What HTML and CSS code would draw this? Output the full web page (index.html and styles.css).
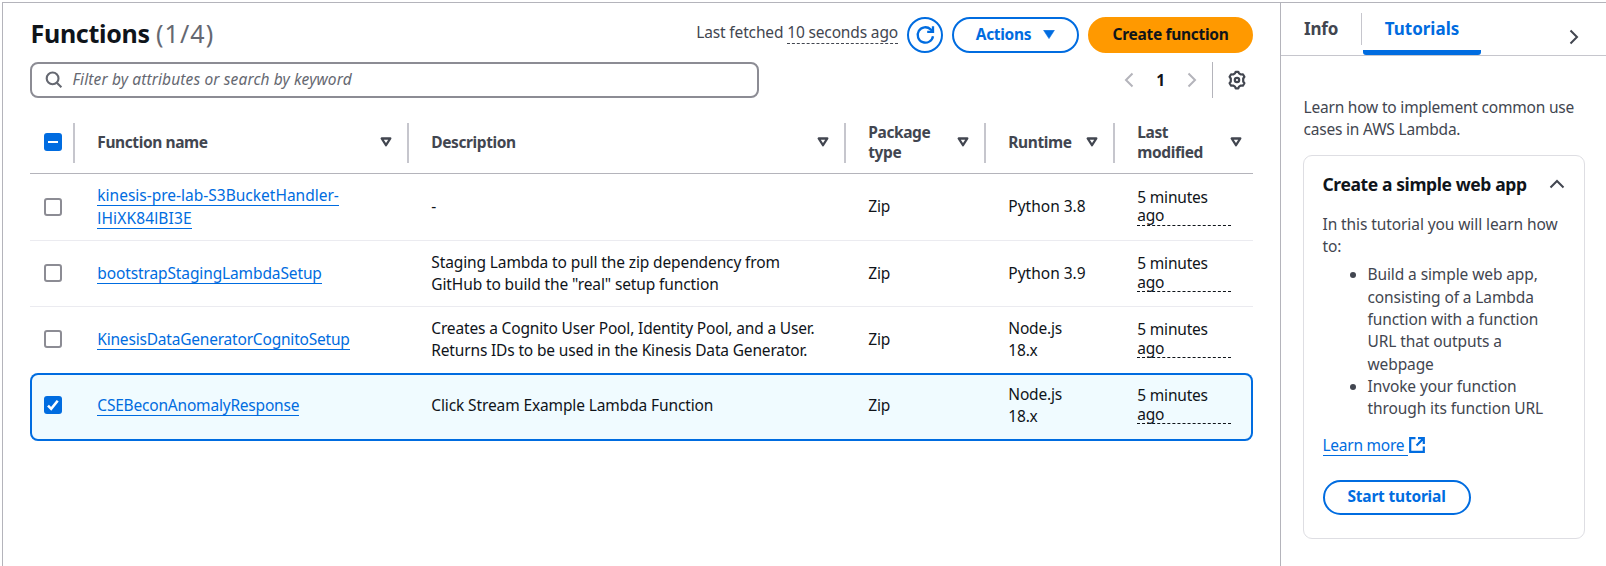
FILE: index.html
```html
<!DOCTYPE html>
<html lang="en">
<head>
<meta charset="utf-8">
<title>Functions</title>
<link rel="stylesheet" href="styles.css">
</head>
<body>
<div class="app">
  <main class="main">
    <header class="header">
      <h1 class="title">Functions <span class="count">(1/4)</span></h1>
      <div class="actions">
        <span class="fetched">Last fetched <span class="dashed">10 seconds ago</span></span>
        <button class="btn round" aria-label="Refresh"><svg width="20" height="20" viewBox="0 0 20 20" fill="none" stroke="currentColor" stroke-width="2.3"><path d="M18 11.2A7.7 7.7 0 1 1 15.600 4.300L17.600 6.200"/><path d="M18 1.200v5.600h-5.800"/></svg></button>
        <button class="btn menu">Actions<svg width="12" height="9" viewBox="0 0 12 9"><path d="M.6.3h10.8L6 8.6z" fill="currentColor" stroke="currentColor" stroke-width=".6" stroke-linejoin="round"/></svg></button>
        <button class="btn primary">Create function</button>
      </div>
    </header>
    <div class="toolbar">
      <div class="search"><svg width="18" height="18" viewBox="0 0 18 18" fill="none" stroke="currentColor" stroke-width="2.1"><circle cx="7.6" cy="7.4" r="5.9"/><path d="M11.8 11.7l4.6 4.5"/></svg><span class="placeholder">Filter by attributes or search by keyword</span></div>
      <div class="pager">
        <svg class="arrow" width="10" height="16" viewBox="0 0 10 16"><path d="M8.5 1.5L2 8l6.500 6.500"/></svg>
        <span class="page">1</span>
        <svg class="arrow" width="10" height="16" viewBox="0 0 10 16"><path d="M1.500 1.500L8 8l-6.500 6.500"/></svg>
        <span class="rule"></span>
        <svg class="gear" width="20" height="20" viewBox="0 0 20 20"><path d="M8 3.400L8.700 1.800h2.600l.7 1.600 1.900 1.100 2-.2 1.500 2.500-1.200 1.700v3l1.200 1.700-1.500 2.500-2-.2-1.900 1.100-.7 1.700H8.700L8 16.600l-1.900-1.100-2 .2-1.500-2.500 1.200-1.700v-3L2.600 6.800l1.500-2.500 2 .2z"/><circle cx="10" cy="10" r="2.200"/></svg>
      </div>
    </div>
    <div class="table">
      <div class="row head">
        <div class="cell check"><span class="box on"><svg width="18" height="18" viewBox="0 0 18 18"><path d="M4 9h10"/></svg></span></div>
        <div class="cell">Function name<svg class="sort" viewBox="0 0 12 10"><path d="M1.700 1.500h8.600L6 8.200z"/></svg></div>
        <div class="cell">Description<svg class="sort" viewBox="0 0 12 10"><path d="M1.700 1.500h8.600L6 8.200z"/></svg></div>
        <div class="cell"><span>Package<br>type</span><svg class="sort" viewBox="0 0 12 10"><path d="M1.700 1.500h8.600L6 8.200z"/></svg></div>
        <div class="cell">Runtime<svg class="sort" viewBox="0 0 12 10"><path d="M1.700 1.500h8.600L6 8.200z"/></svg></div>
        <div class="cell"><span>Last<br>modified</span><svg class="sort" viewBox="0 0 12 10"><path d="M1.700 1.500h8.600L6 8.200z"/></svg></div>
      </div>
      <div class="row first">
        <div class="cell check"><span class="box"></span></div>
        <div class="cell"><span><a class="link wide">kinesis-pre-lab-S3BucketHandler-</a><br><a class="link wider">lHiXK84lBI3E</a></span></div>
        <div class="cell">-</div><div class="cell">Zip</div><div class="cell wide">Python 3.8</div>
        <div class="cell"><span class="time">5 minutes<br>ago</span></div>
      </div>
      <div class="row">
        <div class="cell check"><span class="box"></span></div>
        <div class="cell"><a class="link desc">bootstrapStagingLambdaSetup</a></div>
        <div class="cell desc">Staging Lambda to pull the zip dependency from<br>GitHub to build the "real" setup function</div>
        <div class="cell">Zip</div><div class="cell wide">Python 3.9</div>
        <div class="cell"><span class="time">5 minutes<br>ago</span></div>
      </div>
      <div class="row last">
        <div class="cell check"><span class="box"></span></div>
        <div class="cell"><a class="link">KinesisDataGeneratorCognitoSetup</a></div>
        <div class="cell desc tight">Creates a Cognito User Pool, Identity Pool, and a User.<br>Returns IDs to be used in the Kinesis Data Generator.</div>
        <div class="cell">Zip</div><div class="cell">Node.js<br>18.x</div>
        <div class="cell"><span class="time">5 minutes<br>ago</span></div>
      </div>
      <div class="row selected">
        <div class="cell check"><span class="box on"><svg width="18" height="18" viewBox="0 0 18 18"><path class="tick" d="M4 9.600l3.200 3.200 6.500-8"/></svg></span></div>
        <div class="cell"><a class="link">CSEBeconAnomalyResponse</a></div>
        <div class="cell desc">Click Stream Example Lambda Function</div>
        <div class="cell">Zip</div><div class="cell">Node.js<br>18.x</div>
        <div class="cell"><span class="time">5 minutes<br>ago</span></div>
      </div>
    </div>
  </main>
  <aside class="panel">
    <nav class="tabs">
      <span class="tab info">Info</span>
      <span class="tab active">Tutorials</span>
      <svg class="collapse" width="10" height="16" viewBox="0 0 10 16"><path d="M1.500 1.500L8 8l-6.500 6.500"/></svg>
    </nav>
    <p class="intro">Learn how to implement common use<br>cases in AWS Lambda.</p>
    <section class="card">
      <h2 class="card-title">Create a simple web app<svg width="16" height="10" viewBox="0 0 16 10"><path d="M1.500 8.500L8 2l6.500 6.500"/></svg></h2>
      <p class="text">In this tutorial you will learn how<br>to:</p>
      <ul class="list">
        <li>Build a simple web app,<br>consisting of a Lambda<br>function with a function<br>URL that outputs a<br>webpage</li>
        <li>Invoke your function<br>through its function URL</li>
      </ul>
      <a class="learn"><span class="learn-text">Learn more</span><svg width="16" height="16" viewBox="0 0 16 16"><path d="M6.500 1.200H1.200v13.600h13.600V9.500M9 1.200h5.800V7M14.500 1.500L7.500 8.500"/></svg></a>
      <button class="btn start">Start tutorial</button>
    </section>
  </aside>
</div>
</body>
</html>
```
FILE: styles.css
```css
* { box-sizing: border-box; }
body { margin: 0; background: #fff; color: #0f141a; font: 15.5px/22.3px "Noto Sans", "Open Sans", sans-serif; letter-spacing: -0.2px; white-space: nowrap; }
h1, h2, p, ul { margin: 0; padding: 0; font-weight: inherit; font-size: inherit; }
svg { flex: none; fill: none; }
.app { display: flex; height: 566px; padding: 2px 0 0 2px; overflow: hidden; }
.main { width: 1278px; border: 1px solid #b4b4bb; border-width: 1px 0 0 1px; padding: 14px 27px 0 27px; }
.header { display: flex; justify-content: space-between; height: 36px; }
.title { font-size: 25px; line-height: 32px; font-weight: 700; padding-left: .5px; letter-spacing: -0.3px; }
.count { font-weight: 400; color: #656871; letter-spacing: 1.1px; }
.actions { display: flex; gap: 9px; }
.fetched { color: #424650; line-height: 31px; letter-spacing: -0.15px; }
.dashed { display: inline-block; line-height: 21px; height: 22px; border-bottom: 1px dashed #424650; }
.btn { display: flex; align-items: center; justify-content: center; height: 36px; border: 2px solid #006ce0; border-radius: 18px; background: #fff; color: #006ce0; font: inherit; font-weight: 700; letter-spacing: -0.3px; padding: 0 0 1px; }
.round { width: 36px; padding: 0; }
.menu { width: 127px; gap: 12px; }
.primary { width: 165px; background: #f90; border-color: #f90; color: #0f141a; }
.toolbar { display: flex; justify-content: space-between; height: 36px; margin-top: 9px; }
.search { display: flex; align-items: center; gap: 10px; width: 729px; border: 2px solid #8c8c94; border-radius: 8px; padding: 0 0 1px 12.5px; color: #656871; }
.placeholder { font-style: italic; letter-spacing: 0.13px; }
.pager { display: flex; align-items: center; padding-right: 6px; }
.arrow { stroke: #b4b4bb; stroke-width: 2; }
.page { width: 53px; text-align: center; font-weight: 700; }
.rule { width: 1px; height: 36px; background: #b4b4bb; margin: 0 14px 0 15px; }
.gear { stroke: #424650; stroke-width: 2.2; stroke-linejoin: round; }
.table { margin-top: 11px; }
.row { display: grid; grid-template-columns: 45px 334px 437px 140px 129px 138px; height: 66px; border-bottom: 1px solid #ebebf0; align-items: center; padding-bottom: 1px; }
.cell { display: flex; align-items: center; justify-content: space-between; padding-left: 22.3px; }
.check { padding-left: 14px; }
.head { height: 65px; border-color: #b4b4bb; align-items: start; padding-top: 14px; color: #424650; font-weight: 700; line-height: 20px; letter-spacing: -0.4px; }
.head .cell { height: 40px; border-right: 2px solid #c6c6cd; padding-right: 15px; padding-bottom: 2px; }
.head .cell:last-child { border-right: 0; padding-right: 11px; }
.first { height: 67px; }
.last { border-color: transparent; }
.sort { width: 12px; height: 10px; stroke: #424650; stroke-width: 2.3; stroke-linejoin: round; }
.box { display: block; width: 18px; height: 18px; border: 2px solid #8c8c94; border-radius: 3px; background: #fff; }
.box.on { border: 0; background: #006ce0; }
.box svg { display: block; stroke: #fff; stroke-width: 2; }
.box .tick { stroke-width: 2.6; }
.link { color: #006ce0; display: inline-block; line-height: 20px; height: 21px; border-bottom: 1px solid #006ce0; }
.desc { letter-spacing: -0.12px; }
.tight { letter-spacing: -0.16px; }
.wide { letter-spacing: 0; }
.wider { letter-spacing: 0.14px; }
.time { width: 94px; line-height: 18.5px; border-bottom: 1px dashed #0f141a; }
.selected { height: 68px; border: 0; box-shadow: inset 0 0 0 2px #006ce0; border-radius: 8px; background: #f0fbff; padding-bottom: 4px; }
.panel { flex: 1; border: 1px solid #b4b4bb; border-width: 1px 0 0 1px; color: #424650; }
.tabs { display: flex; height: 53px; border-bottom: 1px solid #c6c6cd; padding: 10px 27px 0 23px; font-size: 17px; font-weight: 700; }
.tab { height: 32px; line-height: 32px; }
.info { width: 58px; border-right: 1px solid #c6c6cd; letter-spacing: -0.2px; }
.active { color: #006ce0; height: 42px; width: 118px; margin-left: 1px; text-align: center; letter-spacing: 0; background: linear-gradient(#006ce0, #006ce0) bottom / 100% 5px no-repeat; border-radius: 0 0 3px 3px; }
.collapse { stroke: #424650; stroke-width: 2; margin: 16px 0 0 auto; }
.intro { padding: 39.500px 0 0 22.500px; }
.card { width: 282px; height: 384px; margin: 14.500px 0 0 22px; border: 1px solid #dedee3; border-radius: 9px; padding: 17px 18px 0 18.500px; }
.card-title { display: flex; justify-content: space-between; align-items: center; font-size: 17.500px; font-weight: 700; color: #0f141a; letter-spacing: -0.4px; }
.card-title svg { stroke: #424650; stroke-width: 2; margin-right: 1px; }
.text { margin-top: 18px; letter-spacing: -0.09px; }
.list { padding-left: 45px; margin-top: 6px; letter-spacing: -0.1px; }
.learn { display: flex; align-items: center; color: #006ce0; margin-top: 15px; letter-spacing: -0.25px; }
.learn-text { border-bottom: 1px solid #006ce0; line-height: 20px; padding-right: 4px; margin-right: 1px; }
.learn svg { stroke: currentColor; stroke-width: 2.200; }
.start { width: 148px; height: 35px; margin-top: 24px; letter-spacing: -0.2px; }
```
